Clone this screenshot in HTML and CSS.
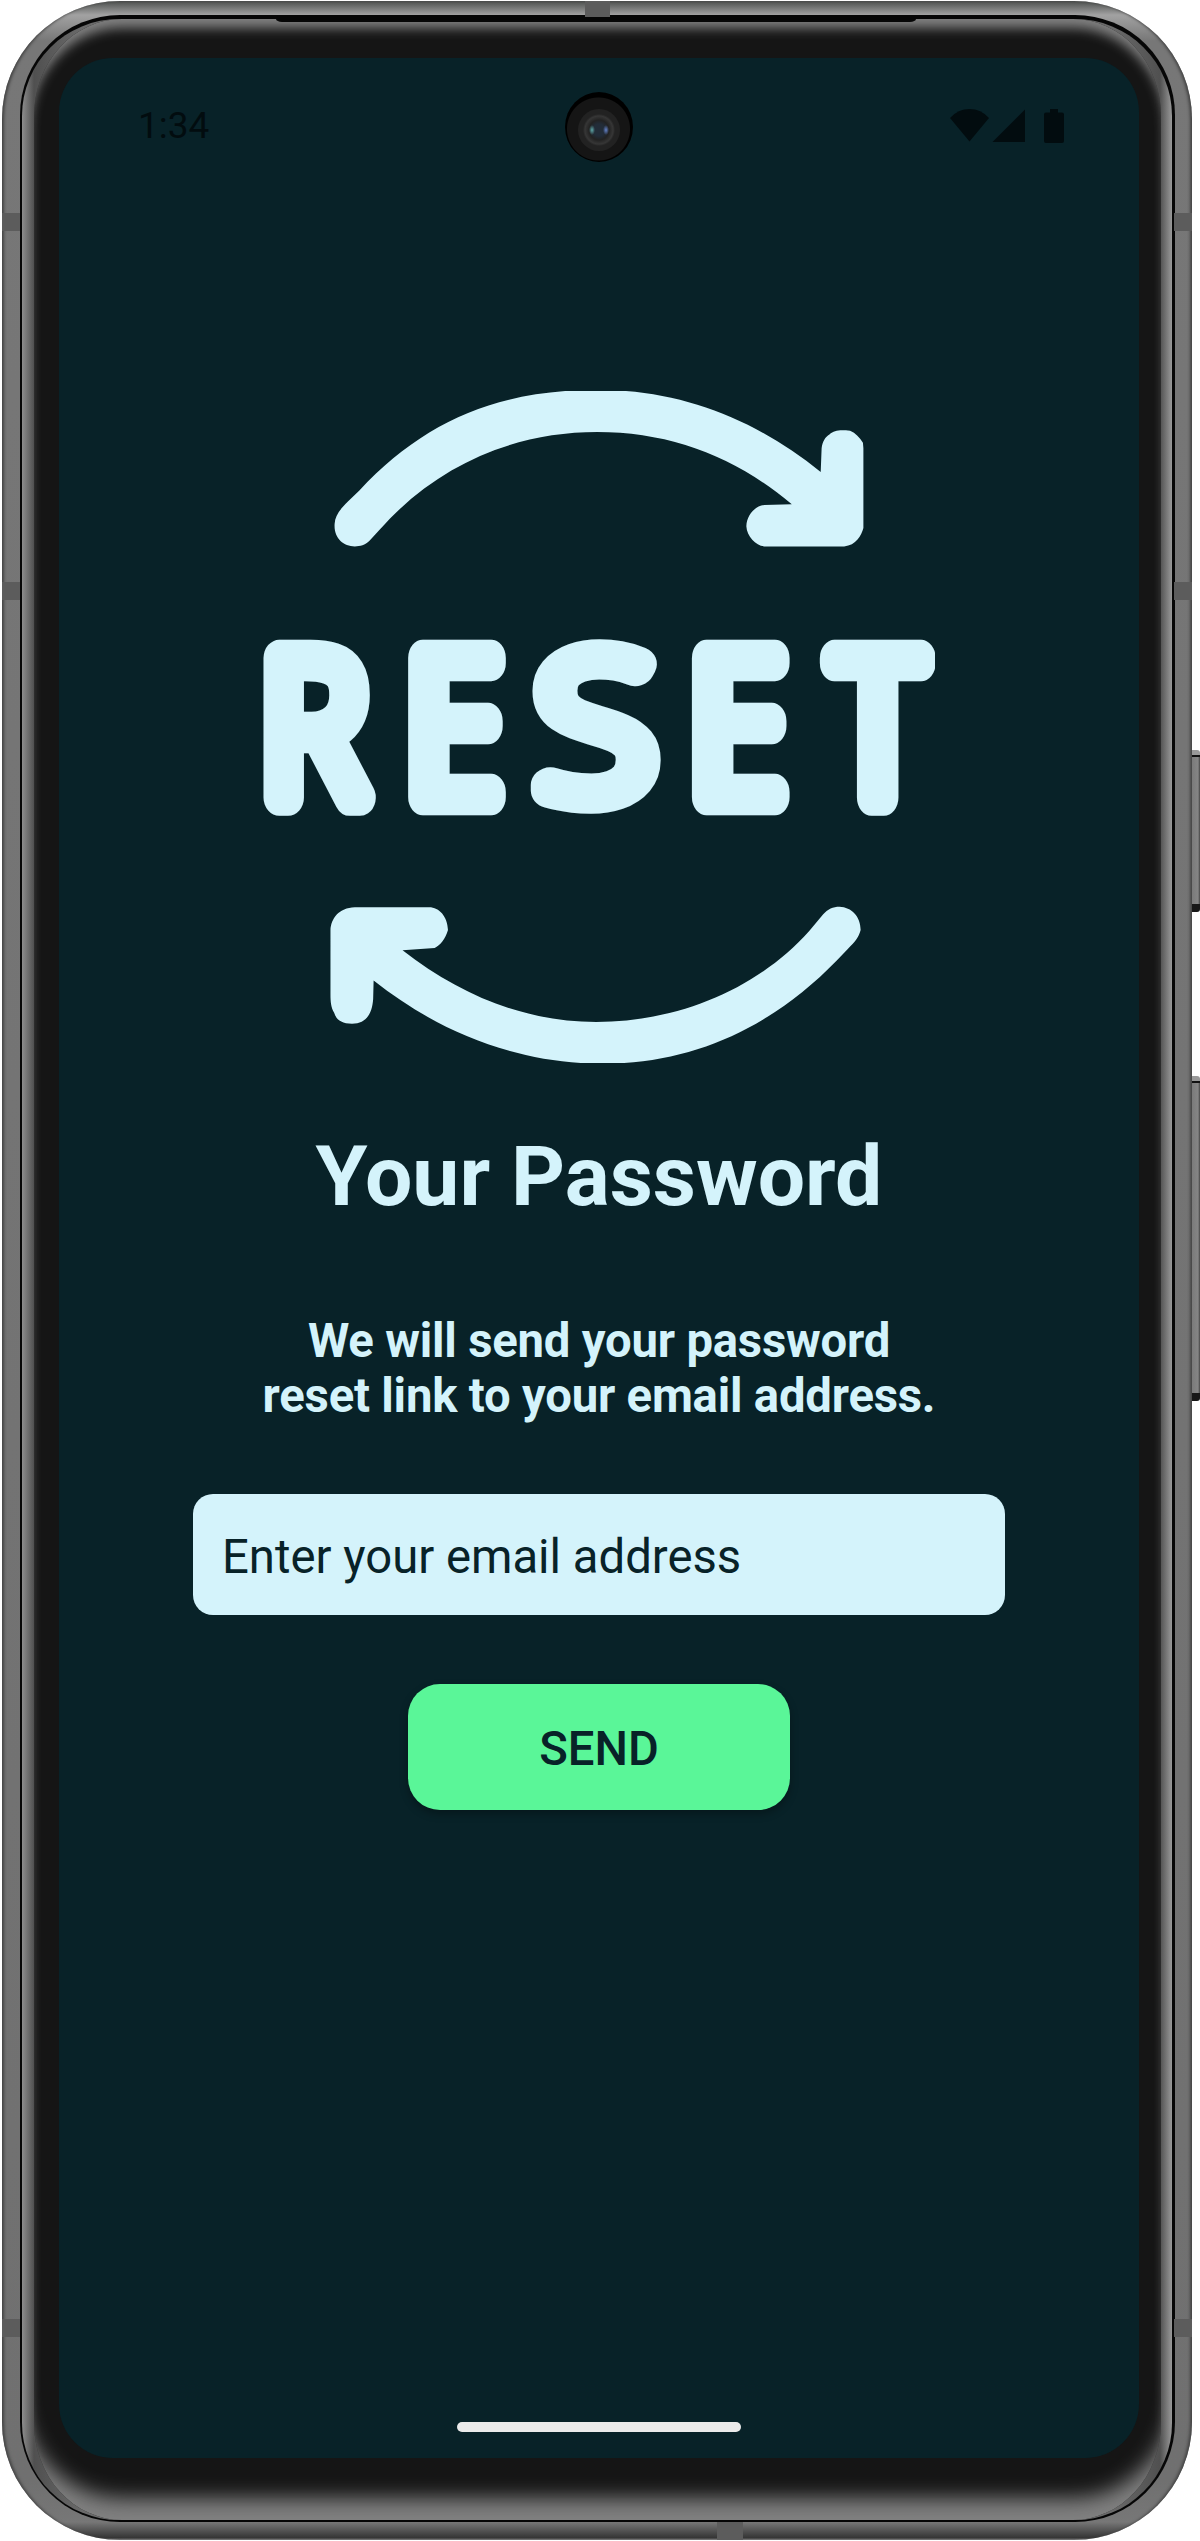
FILE: index.html
```html
<!DOCTYPE html>
<html lang="en">
<head>
<meta charset="utf-8">
<title>Reset Your Password</title>
<link rel="stylesheet" href="styles.css">
</head>
<body>
<div class="phone">
  <span class="key key-power"></span>
  <span class="key key-volume"></span>
  <div class="frame">
    <span class="antenna antenna-top"></span>
    <span class="antenna antenna-bottom"></span>
    <span class="antenna antenna-l1"></span>
    <span class="antenna antenna-l2"></span>
    <span class="antenna antenna-l3"></span>
    <span class="antenna antenna-r1"></span>
    <span class="antenna antenna-r2"></span>
    <span class="antenna antenna-r3"></span>
    <div class="seam">
      <div class="glass">
        <span class="speaker"></span>
        <div class="bezel">
          <main class="screen">
            <header class="status">
              <span class="time">1:34</span>
              <svg class="status-icons" width="114" height="34" viewBox="0 0 114 34">
                <path d="M0 9Q8 0 19.500 0T39 9L19.500 32.500Z"/>
                <path d="M42.500 33L75 .5V33Z"/>
                <path d="M100 0H108V3.500H112Q114 3.500 114 5.500V32Q114 34 112 34H96Q94 34 94 32V5.500Q94 3.500 96 3.500H100Z"/>
              </svg>
            </header>
            <span class="camera"><span class="lens"></span></span>
            <svg class="logo" width="672" height="672" viewBox="50 46 1464 1463">
              <defs>
                <!-- evens out the stems of the narrowed letters -->
                <filter id="widen-r" filterUnits="userSpaceOnUse" x="0" y="540" width="1600" height="480"><feMorphology operator="dilate" radius="5 0"/></filter>
                <filter id="widen-e" filterUnits="userSpaceOnUse" x="0" y="540" width="1600" height="480"><feMorphology operator="dilate" radius="8 0"/></filter>
              </defs>
              <path d="M206 335C207 318 216 305 235 286L260 262C400 112 560 43 778 43C960 43 1120 105 1265 222L1267 170C1269 155 1275 145 1284 140C1295 131 1305 130 1329 132C1341 137 1350 147 1357 158L1358 170V344C1354 360 1342 382 1316 384H1142C1124 382 1104 362 1103 340C1104 316 1122 296 1142 294L1202 292C1080 190 940 135 778 135C600 135 430 205 304 348L282 372C272 382 262 384 250 384C225 384 204 366 206 335Z"/>
              <path d="M197 1220C198 1195 215 1171 250 1170H412C434 1170 452 1190 453 1220C448 1238 436 1254 424 1259L354 1264C480 1362 620 1420 776 1420C960 1420 1130 1345 1240 1222L1270 1186C1280 1174 1292 1169 1306 1169C1332 1170 1352 1190 1352 1220C1348 1235 1340 1246 1324 1261L1300 1286C1160 1430 990 1511 790 1511C600 1511 430 1440 291 1330L290 1370C288 1400 276 1424 244 1424C220 1424 209 1414 205 1400C198 1388 197 1375 197 1360Z"/>
              <g class="logo-word">
                <g filter="url(#widen-r)"><text transform="translate(52 930) scale(.87 1)">R</text></g>
                <g filter="url(#widen-e)"><text transform="translate(372 930) scale(.8 1)">E</text></g>
                <text transform="translate(651 924) scale(1.07 .965)">S</text>
                <g filter="url(#widen-e)"><text transform="translate(990 930) scale(.8 1)">E</text></g>
                <g filter="url(#widen-e)"><text transform="translate(1303 930) scale(.8 1)">T</text></g>
              </g>
            </svg>
            <h1 class="title">Your Password</h1>
            <p class="hint">We will send your password<br>reset link to your email address.</p>
            <input class="email" type="email" placeholder="Enter your email address">
            <button class="send">SEND</button>
            <span class="home-bar"></span>
          </main>
        </div>
      </div>
    </div>
  </div>
</div>
</body>
</html>
```
FILE: styles.css
```css
* {
  box-sizing: border-box;
}

body {
  margin: 0;
  background: #fff;
  font-family: Roboto, "Liberation Sans", sans-serif;
}

.phone {
  position: relative;
  width: 1200px;
  height: 2541px;
  padding: 1px 8px 1px 2px;
}

/* Metal body */
.frame {
  position: relative;
  width: 1190px;
  height: 2539px;
  padding: 14px 17px 18px 18px;
  border-radius: 118px;
  background: linear-gradient(#4c4f4d, #a2a2a2 14px, #777 40px, #707070 2480px, #777 2521px, #343434 2537px, #999);
  box-shadow: inset 3px 0 3px -1px #444, inset -3px 0 3px -1px #444;
}

.seam {
  height: 2507px;
  padding: 4px 3px 2px 2px;
  border-radius: 100px;
  background: #060606;
}

.glass {
  position: relative;
  height: 2501px;
  padding: 0 11px 0 12px;
  border-radius: 97px;
  background: linear-gradient(90deg, #8c8c8c, #505050 12px, #6a6a6a 60px, #6a6a6a calc(100% - 60px), #505050 calc(100% - 12px), #999);
}

.speaker {
  position: absolute;
  top: 0;
  left: 254px;
  width: 640px;
  height: 3px;
  border-radius: 0 0 6px 6px / 0 0 3px 3px;
  background: #060606;
}

.bezel {
  height: 2501px;
  padding: 39px 22px 61px 25px;
  border-radius: 88px / 97px;
  background: #151515;
  box-shadow: inset 0 14px 12px -5px #828282, inset 0 -36px 20px -14px #808080;
}

.screen {
  position: relative;
  display: flex;
  flex-direction: column;
  align-items: center;
  width: 1080px;
  height: 2400px;
  border-radius: 54px;
  background: #082228;
}

/* Side keys */
.key {
  position: absolute;
  right: 0;
  width: 10px;
  border-radius: 0 3px 3px 0;
  background: linear-gradient(#999 5px, #111 5px, #111 7px, transparent 7px, transparent calc(100% - 8px), #181818 calc(100% - 8px)), linear-gradient(90deg, #777, #858585 80%, #444);
}

.key-power {
  top: 750px;
  height: 162px;
}

.key-volume {
  top: 1076px;
  height: 325px;
}

/* Antenna breaks */
.antenna {
  position: absolute;
  width: 18px;
  height: 18px;
  background: #5c5c5c;
}

.antenna-top {
  top: 0;
  left: 583px;
  width: 25px;
  height: 16px;
}

.antenna-bottom {
  bottom: 0;
  left: 715px;
  width: 26px;
  height: 18px;
}

.antenna-l1 { left: 0; top: 212px; }
.antenna-l2 { left: 0; top: 581px; }
.antenna-l3 { left: 0; top: 2318px; }
.antenna-r1 { right: 0; top: 212px; }
.antenna-r2 { right: 0; top: 581px; }
.antenna-r3 { right: 0; top: 2318px; }

/* Status bar */
.status {
  display: flex;
  justify-content: space-between;
  align-items: flex-start;
  width: 100%;
  height: 333px;
  padding: 46px 75px 0 79px;
}

.time {
  color: #020c0f;
  font-size: 37px;
  line-height: 44px;
}

.status-icons {
  margin-top: 5px;
  fill: #020c0f;
}

.camera {
  position: absolute;
  top: 34px;
  left: 506px;
  display: grid;
  place-items: center;
  width: 68px;
  height: 70px;
  padding-top: 5px;
  border-radius: 50%;
  background: radial-gradient(circle at 33.500px 37px, #151515 31px, #000 32px);
}

.lens {
  width: 42px;
  height: 42px;
  border-radius: 50%;
  background:
    radial-gradient(ellipse 3px 5px at 14px 21px, #5fa8a8, transparent),
    radial-gradient(ellipse 3px 5px at 28px 21px, #6482c8, transparent),
    radial-gradient(circle, #222c38 6px, #222 10px, #363636 14px, #222 16px);
}

/* Content */
.logo {
  flex: none;
  fill: #d4f3fb;
}

.logo-word {
  font: 100 426px "Noto Sans", sans-serif;
  stroke: #d4f3fb;
  stroke-width: 80px;
  stroke-linejoin: round;
}

.title {
  margin: 65px 0 0;
  color: #d4f3fb;
  font-size: 84px;
  line-height: 98px;
}

.hint {
  margin: 88px 0 0;
  color: #d4f3fb;
  font-size: 47.25px;
  font-weight: 700;
  line-height: 55.400px;
  letter-spacing: -.2px;
  text-align: center;
}

.email {
  width: 812px;
  height: 121px;
  margin: 69px 0 0;
  padding: 6px 29px 0;
  border: 0;
  border-radius: 20px;
  background: #d4f3fb;
  font: 47.25px Roboto, sans-serif;
}

.email::placeholder {
  color: #082228;
  opacity: 1;
}

.send {
  width: 382px;
  height: 126px;
  margin: 69px 0 0;
  padding: 4px 0 0;
  border: 0;
  border-radius: 32px;
  background: #5af698;
  box-shadow: 0 4px 8px rgba(0, 0, 0, .3);
  color: #082228;
  font: 500 47.25px Roboto, sans-serif;
}

.home-bar {
  width: 284px;
  height: 10px;
  margin: auto 0 26px;
  border-radius: 5px;
  background: #ebebeb;
}
```
